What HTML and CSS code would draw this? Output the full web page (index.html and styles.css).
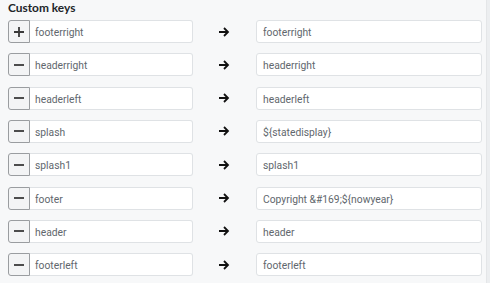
FILE: index.html
```html
<!DOCTYPE html>
<html>
<head>
<meta charset="utf-8">
<link rel="stylesheet" href="styles.css">
</head>
<body>
<div class="page">
  <div class="panel">
    <div class="title">Custom keys</div>
    <div class="grid">
      <div class="group"><button class="btn"><svg viewBox="0 0 12 12" width="12" height="12"><path d="M6 1v10M1 6h10" stroke="#3a3a3a" stroke-width="1.8"/></svg></button><div class="field">footerright</div></div>
      <div class="arrow"><svg viewBox="0 0 12 12" width="12" height="12"><path d="M1 6h9M6 2l4 4-4 4" fill="none" stroke="#111" stroke-width="1.8"/></svg></div>
      <div class="field">footerright</div>

      <div class="group"><button class="btn"><svg viewBox="0 0 12 12" width="12" height="12"><path d="M1 6h10" stroke="#3a3a3a" stroke-width="1.8"/></svg></button><div class="field">headerright</div></div>
      <div class="arrow"><svg viewBox="0 0 12 12" width="12" height="12"><path d="M1 6h9M6 2l4 4-4 4" fill="none" stroke="#111" stroke-width="1.8"/></svg></div>
      <div class="field">headerright</div>

      <div class="group"><button class="btn"><svg viewBox="0 0 12 12" width="12" height="12"><path d="M1 6h10" stroke="#3a3a3a" stroke-width="1.8"/></svg></button><div class="field">headerleft</div></div>
      <div class="arrow"><svg viewBox="0 0 12 12" width="12" height="12"><path d="M1 6h9M6 2l4 4-4 4" fill="none" stroke="#111" stroke-width="1.8"/></svg></div>
      <div class="field">headerleft</div>

      <div class="group"><button class="btn"><svg viewBox="0 0 12 12" width="12" height="12"><path d="M1 6h10" stroke="#3a3a3a" stroke-width="1.8"/></svg></button><div class="field">splash</div></div>
      <div class="arrow"><svg viewBox="0 0 12 12" width="12" height="12"><path d="M1 6h9M6 2l4 4-4 4" fill="none" stroke="#111" stroke-width="1.8"/></svg></div>
      <div class="field">${statedisplay}</div>

      <div class="group"><button class="btn"><svg viewBox="0 0 12 12" width="12" height="12"><path d="M1 6h10" stroke="#3a3a3a" stroke-width="1.8"/></svg></button><div class="field">splash1</div></div>
      <div class="arrow"><svg viewBox="0 0 12 12" width="12" height="12"><path d="M1 6h9M6 2l4 4-4 4" fill="none" stroke="#111" stroke-width="1.8"/></svg></div>
      <div class="field">splash1</div>

      <div class="group"><button class="btn"><svg viewBox="0 0 12 12" width="12" height="12"><path d="M1 6h10" stroke="#3a3a3a" stroke-width="1.8"/></svg></button><div class="field">footer</div></div>
      <div class="arrow"><svg viewBox="0 0 12 12" width="12" height="12"><path d="M1 6h9M6 2l4 4-4 4" fill="none" stroke="#111" stroke-width="1.8"/></svg></div>
      <div class="field">Copyright &amp;#169;${nowyear}</div>

      <div class="group"><button class="btn"><svg viewBox="0 0 12 12" width="12" height="12"><path d="M1 6h10" stroke="#3a3a3a" stroke-width="1.8"/></svg></button><div class="field">header</div></div>
      <div class="arrow"><svg viewBox="0 0 12 12" width="12" height="12"><path d="M1 6h9M6 2l4 4-4 4" fill="none" stroke="#111" stroke-width="1.8"/></svg></div>
      <div class="field">header</div>

      <div class="group"><button class="btn"><svg viewBox="0 0 12 12" width="12" height="12"><path d="M1 6h10" stroke="#3a3a3a" stroke-width="1.8"/></svg></button><div class="field">footerleft</div></div>
      <div class="arrow"><svg viewBox="0 0 12 12" width="12" height="12"><path d="M1 6h9M6 2l4 4-4 4" fill="none" stroke="#111" stroke-width="1.8"/></svg></div>
      <div class="field">footerleft</div>
    </div>
  </div>
  <div class="strip"></div>
</div>
</body>
</html>
```
FILE: styles.css
```css
html, body {
  margin: 0;
  padding: 0;
  background: #f7f8f9;
}
.page {
  display: flex;
  width: 490px;
  height: 283px;
  overflow: hidden;
}
.panel {
  flex: 1;
  padding: 0 0 0 8px;
}
.strip {
  width: 3px;
  background: #eceef0;
  border-left: 1px solid #e4e6e8;
}
.title {
  font-family: Lato, sans-serif;
  font-weight: 700;
  font-size: 11.9px;
  line-height: 16px;
  color: #212529;
  height: 20px;
}
.grid {
  display: grid;
  grid-template-columns: 185px 63px 226px;
  grid-auto-rows: 23px;
  row-gap: 10.33px;
}
.group {
  display: flex;
}
.btn {
  width: 22px;
  height: 23px;
  margin: 0;
  padding: 0;
  box-sizing: border-box;
  border: 1px solid #9a9da0;
  border-radius: 3px 0 0 3px;
  background: #f3f4f5;
  display: flex;
  align-items: center;
  justify-content: center;
}
.group .field {
  flex: 1;
  border-left: none;
  border-radius: 0 3px 3px 0;
  padding-left: 5px;
}
.field {
  box-sizing: border-box;
  height: 23px;
  background: #fff;
  border: 1px solid #dfe2e5;
  border-radius: 3px;
  padding: 0 0 0 6px;
  font-family: Roboto, sans-serif;
  font-size: 10.3px;
  line-height: 23px;
  color: #61676d;
  white-space: nowrap;
  overflow: hidden;
}
.arrow {
  display: flex;
  align-items: center;
  justify-content: center;
}
.arrow svg {
  margin-left: -1px;
}
```
